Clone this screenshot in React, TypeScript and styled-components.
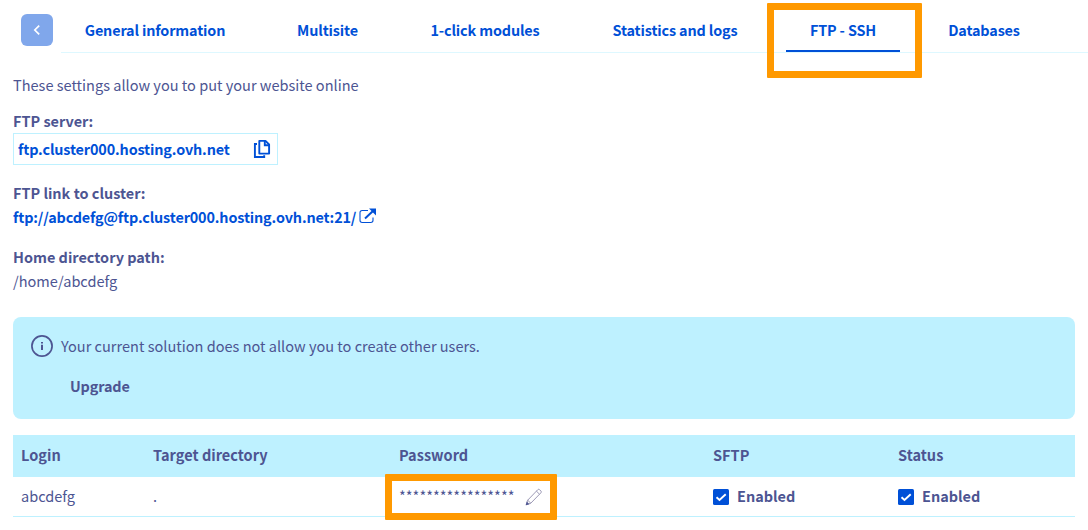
import React from "react";
import styled, { createGlobalStyle } from "styled-components";

const BLUE = "#0050d7";
const INK = "#4d5592";
const PALE = "#bef1ff";
const ORANGE = "#ff9900";

const Global = createGlobalStyle`
  *, *::before, *::after { box-sizing: border-box; }
  body {
    margin: 0;
    background: #fff;
    color: ${INK};
    font-family: "Source Sans Pro", "Noto Sans CJK SC", sans-serif;
    font-size: 14.56px;
    line-height: 24px;
  }
`;

const Page = styled.main`
  width: 1088px;
  height: 530px;
  overflow: hidden;
`;

const Header = styled.header`
  display: flex;
  height: 53px;
  padding-left: 21px;
`;

const BackButton = styled.button`
  display: flex;
  align-items: center;
  justify-content: center;
  width: 32px;
  height: 32px;
  margin: 14px 8px 0 0;
  padding: 0;
  border: 0;
  border-radius: 6px;
  background: #80a7eb;
`;

const Tabs = styled.nav`
  display: flex;
  flex: 1;
  gap: 24px;
  border-bottom: 1px solid #def8ff;
`;

const Tab = styled.a<{ $active?: boolean; $width: number }>`
  position: relative;
  flex: none;
  width: ${(p) => p.$width}px;
  height: 52px;
  padding-top: 18px;
  border-bottom: 2px solid ${(p) => (p.$active ? BLUE : "transparent")};
  color: ${BLUE};
  font-size: 14.4px;
  font-weight: 700;
  letter-spacing: -0.14px;
  text-align: center;
  white-space: nowrap;
`;

const Highlight = styled.span<{ $x: number; $y: number; $w: number; $h: number }>`
  position: absolute;
  left: ${(p) => p.$x}px;
  top: ${(p) => p.$y}px;
  width: ${(p) => p.$w}px;
  height: ${(p) => p.$h}px;
  border: 7px solid ${ORANGE};
  border-radius: 1px;
  pointer-events: none;
`;

const Content = styled.section`
  padding: 20px 13px 0;
`;

const Intro = styled.p`
  margin: 0 0 12px;
`;

const Field = styled.div<{ $gap: number }>`
  margin-bottom: ${(p) => p.$gap}px;
`;

const Label = styled.div`
  font-size: 14.46px;
  font-weight: 700;
`;

const CopyBox = styled.div`
  display: flex;
  align-items: center;
  justify-content: space-between;
  width: 265px;
  height: 32px;
  padding: 0 6px 0 4px;
  border: 1px solid ${PALE};
  color: ${BLUE};
  font-size: 14.4px;
  font-weight: 700;
  letter-spacing: -0.14px;
`;

const FtpLink = styled.a`
  display: flex;
  gap: 3px;
  color: ${BLUE};
  font-size: 14.4px;
  font-weight: 700;
  letter-spacing: -0.14px;

  svg { margin-top: 3px; }
`;

const Notice = styled.aside`
  height: 102px;
  padding: 17px 18px 0;
  border-radius: 8px;
  background: ${PALE};
`;

const NoticeLine = styled.div`
  display: flex;
  gap: 8px;

  svg { margin-top: 1px; }
`;

const Upgrade = styled.a`
  display: block;
  margin: 16px 0 0 39px;
  font-size: 14.4px;
  font-weight: 700;
  letter-spacing: -0.14px;
`;

const Table = styled.div`
  margin-top: 16px;
`;

const Row = styled.div<{ $head?: boolean }>`
  display: grid;
  grid-template-columns: 132px 246px 314px 185px 1fr;
  align-items: center;
  height: ${(p) => (p.$head ? 42 : 40)}px;
  font-weight: ${(p) => (p.$head ? 700 : 400)};
  background: ${(p) => (p.$head ? PALE : "transparent")};
  border-bottom: ${(p) => (p.$head ? "0" : `1px solid ${PALE}`)};
`;

const Cell = styled.div`
  position: relative;
  display: flex;
  align-items: center;
  padding-left: 8px;
`;

const CellText = styled.span`
  padding-bottom: 2px;
`;

const Enabled = styled(CellText)`
  margin-left: 8px;
  font-size: 14.46px;
  font-weight: 700;
`;

const Mask = styled(CellText)`
  width: 126px;
`;

const ChevronIcon = () => (
  <svg width="10" height="12" viewBox="0 0 10 12" fill="none" stroke="#fff" strokeWidth="1.7">
    <path d="M7.2 1.6 2.8 6l4.4 4.4" />
  </svg>
);

const CopyIcon = () => (
  <svg width="18" height="20" viewBox="0 0 18 20" fill="none" stroke={BLUE} strokeWidth="1.9">
    <path d="M6.3 1.9h6.2l3.6 3.6v9.1H6.3z" strokeLinejoin="round" />
    <path d="M11.8 2v4.2h4.3M4 5H1.9v13h9.3v-1.8" />
  </svg>
);

const ExternalIcon = () => (
  <svg width="18" height="18" viewBox="0 0 18 18" fill="none" stroke={BLUE}>
    <path d="M9 2.500H3.200Q1 2.500 1 4.700v7.600q0 2.200 2.200 2.200h8.600q2.200 0 2.200-2.200V9.500" strokeWidth="1.1" />
    <path d="m6 10.500 8-7.500" strokeWidth="2" />
    <path d="M10 .500h7v7z" fill={BLUE} stroke="none" />
  </svg>
);

const InfoIcon = () => (
  <svg width="22" height="22" viewBox="0 0 22 22">
    <circle cx="11" cy="11" r="10.1" fill="none" stroke={INK} strokeWidth="1.7" />
    <path d="M10 7h2v1.500h-2zM10 9.800h2V15h-2z" fill={INK} />
  </svg>
);

const PencilIcon = () => (
  <svg width="18" height="18" viewBox="0 0 18 18" fill="none" stroke="#8a86a8" strokeWidth="0.85">
    <path d="m1.200 16.800 1.500-4.600L12.800 1.700q.9-.9 1.800 0l1.300 1.300q.9.900 0 1.800L5.800 15.200zM11.400 3.100l3.100 3.100M2.700 12.200l3.100 3" />
    <path d="m.7 17.300 1.100-3.700 2.600 2.600z" fill={INK} stroke="none" />
  </svg>
);

const CheckIcon = () => (
  <svg width="16" height="16" viewBox="0 0 16 16">
    <rect width="16" height="16" rx="1.500" fill={BLUE} />
    <path d="m3.500 8.200 3 2.800 6.200-5.800" fill="none" stroke="#fff" strokeWidth="1.900" />
  </svg>
);

const tabs = [
  { name: "General information", width: 188 },
  { name: "Multisite", width: 109 },
  { name: "1-click modules", width: 158 },
  { name: "Statistics and logs", width: 174 },
  { name: "FTP - SSH", width: 114, active: true },
  { name: "Databases", width: 120 },
];

const columns = ["Login", "Target directory", "Password", "SFTP", "Status"];

export default function App() {
  return (
    <Page>
      <Global />
      <Header>
        <BackButton aria-label="Back"><ChevronIcon /></BackButton>
        <Tabs>
          {tabs.map((t) => (
            <Tab key={t.name} $active={t.active} $width={t.width}>
              {t.name}
              {t.active && <Highlight $x={-19} $y={3} $w={155} $h={75} />}
            </Tab>
          ))}
        </Tabs>
      </Header>
      <Content>
        <Intro>These settings allow you to put your website online</Intro>
        <Field $gap={16}>
          <Label>FTP server:</Label>
          <CopyBox><span>ftp.cluster000.hosting.ovh.net</span><CopyIcon /></CopyBox>
        </Field>
        <Field $gap={16}>
          <Label>FTP link to cluster:</Label>
          <FtpLink><span>ftp://abcdefg@ftp.cluster000.hosting.ovh.net:21/</span><ExternalIcon /></FtpLink>
        </Field>
        <Field $gap={24}>
          <Label>Home directory path:</Label>
          <div>/home/abcdefg</div>
        </Field>
        <Notice>
          <NoticeLine>
            <InfoIcon />
            <span>Your current solution does not allow you to create other users.</span>
          </NoticeLine>
          <Upgrade>Upgrade</Upgrade>
        </Notice>
        <Table>
          <Row $head>
            {columns.map((c) => (
              <Cell key={c}><CellText>{c}</CellText></Cell>
            ))}
          </Row>
          <Row>
            <Cell><CellText>abcdefg</CellText></Cell>
            <Cell><CellText>.</CellText></Cell>
            <Cell>
              <Mask>*****************</Mask>
              <PencilIcon />
              <Highlight $x={-6} $y={-10} $w={172} $h={46} />
            </Cell>
            <Cell><CheckIcon /><Enabled>Enabled</Enabled></Cell>
            <Cell><CheckIcon /><Enabled>Enabled</Enabled></Cell>
          </Row>
        </Table>
      </Content>
    </Page>
  );
}
